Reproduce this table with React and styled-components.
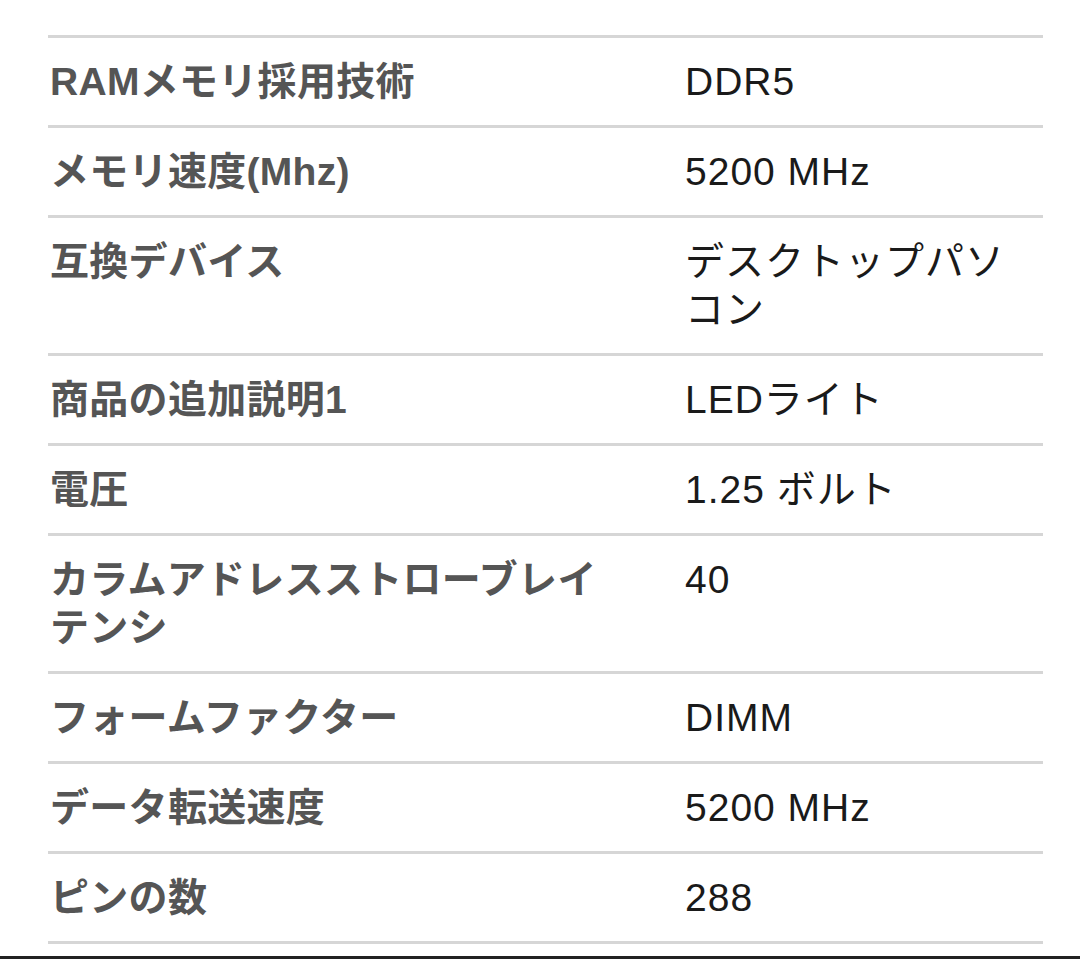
import React from 'react'
import styled, { createGlobalStyle } from 'styled-components'

const specs = [
  ['RAMメモリ採用技術', 'DDR5'],
  ['メモリ速度(Mhz)', '5200 MHz'],
  ['互換デバイス', 'デスクトップパソコン'],
  ['商品の追加説明1', 'LEDライト'],
  ['電圧', '1.25 ボルト'],
  ['カラムアドレスストローブレイテンシ', '40'],
  ['フォームファクター', 'DIMM'],
  ['データ転送速度', '5200 MHz'],
  ['ピンの数', '288'],
]

export default function App() {
  return (
    <>
      <GlobalStyle />
      <Page>
        <Table>
          {specs.map(([label, value]) => (
            <Row key={label}>
              <Label>{label}</Label>
              <Value>{value}</Value>
            </Row>
          ))}
        </Table>
        <BottomRule />
      </Page>
    </>
  )
}

const GlobalStyle = createGlobalStyle`
  html, body {
    margin: 0;
    padding: 0;
    background: #fff;
  }
`

const Page = styled.div`
  height: 959px;
  padding-top: 35px;
  box-sizing: border-box;
  display: flex;
  flex-direction: column;
  overflow: hidden;
`

const Table = styled.div`
  margin: 0 37px 0 48px;
  border-bottom: 3px solid #d6d6d6;
`

const Row = styled.div`
  display: grid;
  grid-template-columns: 635px 1fr;
  border-top: 3px solid #d6d6d6;
  padding: 20px 0 19px 2px;
`

const Label = styled.div`
  font-family: "Liberation Sans", "Noto Sans CJK JP", sans-serif;
  font-weight: 700;
  font-size: 39px;
  line-height: 48px;
  color: #555555;
  letter-spacing: 0.3px;
  padding-right: 60px;
`

const Value = styled.div`
  font-family: "Liberation Sans", "Noto Sans CJK JP", sans-serif;
  font-size: 39px;
  line-height: 48px;
  color: #1a1a1a;
  letter-spacing: 1px;
  padding-right: 20px;
`

const BottomRule = styled.div`
  margin-top: auto;
  height: 3px;
  background: #222;
`
